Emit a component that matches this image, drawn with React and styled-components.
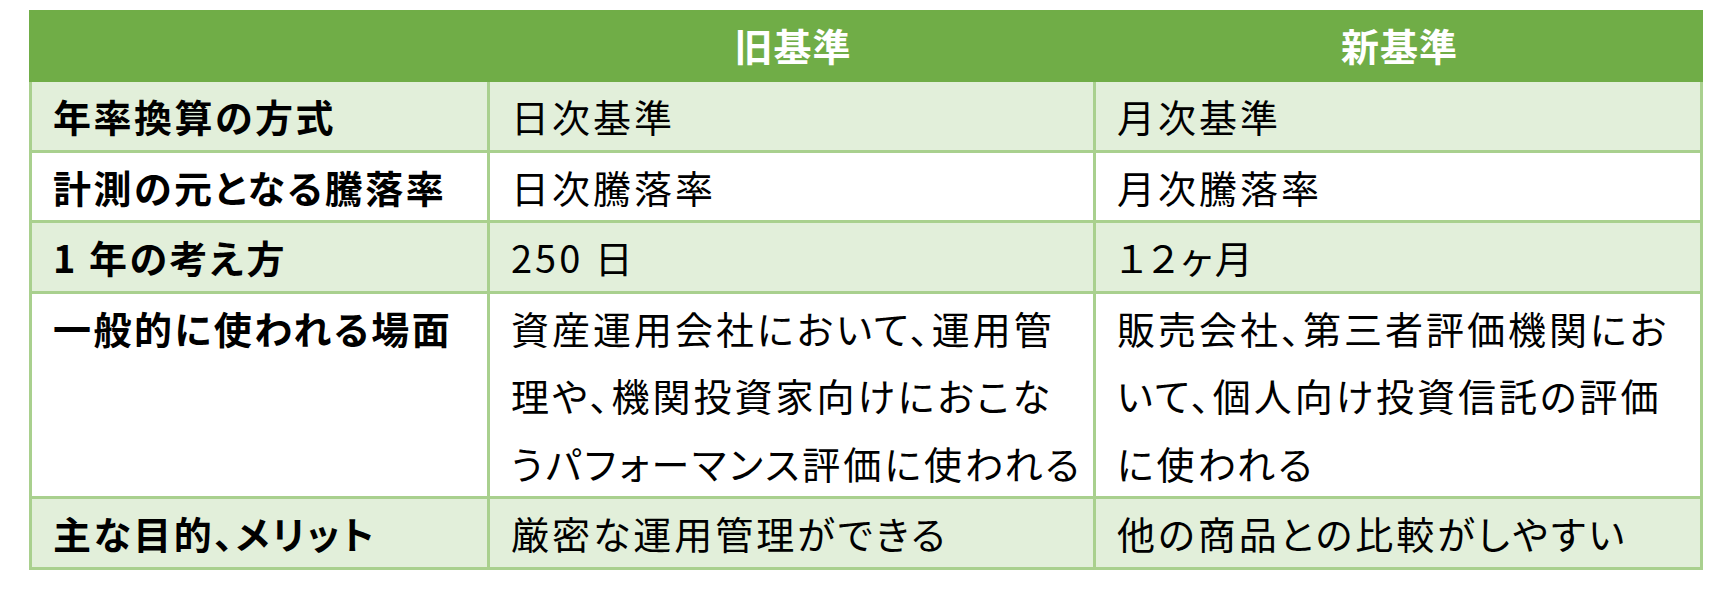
import React from 'react';
import styled, { createGlobalStyle } from 'styled-components';

const GlobalStyle = createGlobalStyle`
  body {
    margin: 0;
    background: #fff;
    font-family: "Noto Sans CJK JP", "Noto Sans", sans-serif;
  }
`;

const line = '#a9d08e';

const Table = styled.div`
  width: 1674px;
  margin: 10px 0 0 29px;
`;

const Row = styled.div`
  display: grid;
  grid-template-columns: 461px 606px 607px;
  background: ${p => (p.$shaded ? '#e2efda' : '#fff')};
`;

const HeadRow = styled(Row)`
  background: #70ad47;
  height: 72px;
`;

const HeadCell = styled.div`
  color: #fff;
  font-weight: 700;
  font-size: 38px;
  line-height: 70px;
  text-align: center;
  letter-spacing: 1px;
`;

const Cell = styled.div`
  border-right: 3px solid ${line};
  border-bottom: 3px solid ${line};
  padding: 0 12px 0 21px;
  font-size: 38px;
  line-height: 67.5px;
  letter-spacing: 3px;
  white-space: nowrap;
  color: #000;
  font-feature-settings: "palt";
`;

const LabelCell = styled(Cell)`
  border-left: 3px solid ${line};
  font-weight: 700;
  letter-spacing: 2.5px;
`;

const rows = [
  { label: '年率換算の方式', old: ['日次基準'], next: ['月次基準'] },
  { label: '計測の元となる騰落率', old: ['日次騰落率'], next: ['月次騰落率'] },
  { label: '1 年の考え方', old: ['250 日'], next: ['１２ヶ月'] },
  {
    label: '一般的に使われる場面',
    old: ['資産運用会社において、運用管', '理や、機関投資家向けにおこな', 'うパフォーマンス評価に使われる'],
    next: ['販売会社、第三者評価機関にお', 'いて、個人向け投資信託の評価', 'に使われる'],
  },
  { label: '主な目的、メリット', old: ['厳密な運用管理ができる'], next: ['他の商品との比較がしやすい'] },
];

const Lines = ({ items }) =>
  items.map((t, i) => (
    <React.Fragment key={i}>
      {i > 0 && <br />}
      {t}
    </React.Fragment>
  ));

export default function App() {
  return (
    <>
      <GlobalStyle />
      <Table>
        <HeadRow>
          <HeadCell />
          <HeadCell>旧基準</HeadCell>
          <HeadCell>新基準</HeadCell>
        </HeadRow>
        {rows.map((r, i) => (
          <Row key={r.label} $shaded={i % 2 === 0}>
            <LabelCell>{r.label}</LabelCell>
            <Cell>
              <Lines items={r.old} />
            </Cell>
            <Cell>
              <Lines items={r.next} />
            </Cell>
          </Row>
        ))}
      </Table>
    </>
  );
}
